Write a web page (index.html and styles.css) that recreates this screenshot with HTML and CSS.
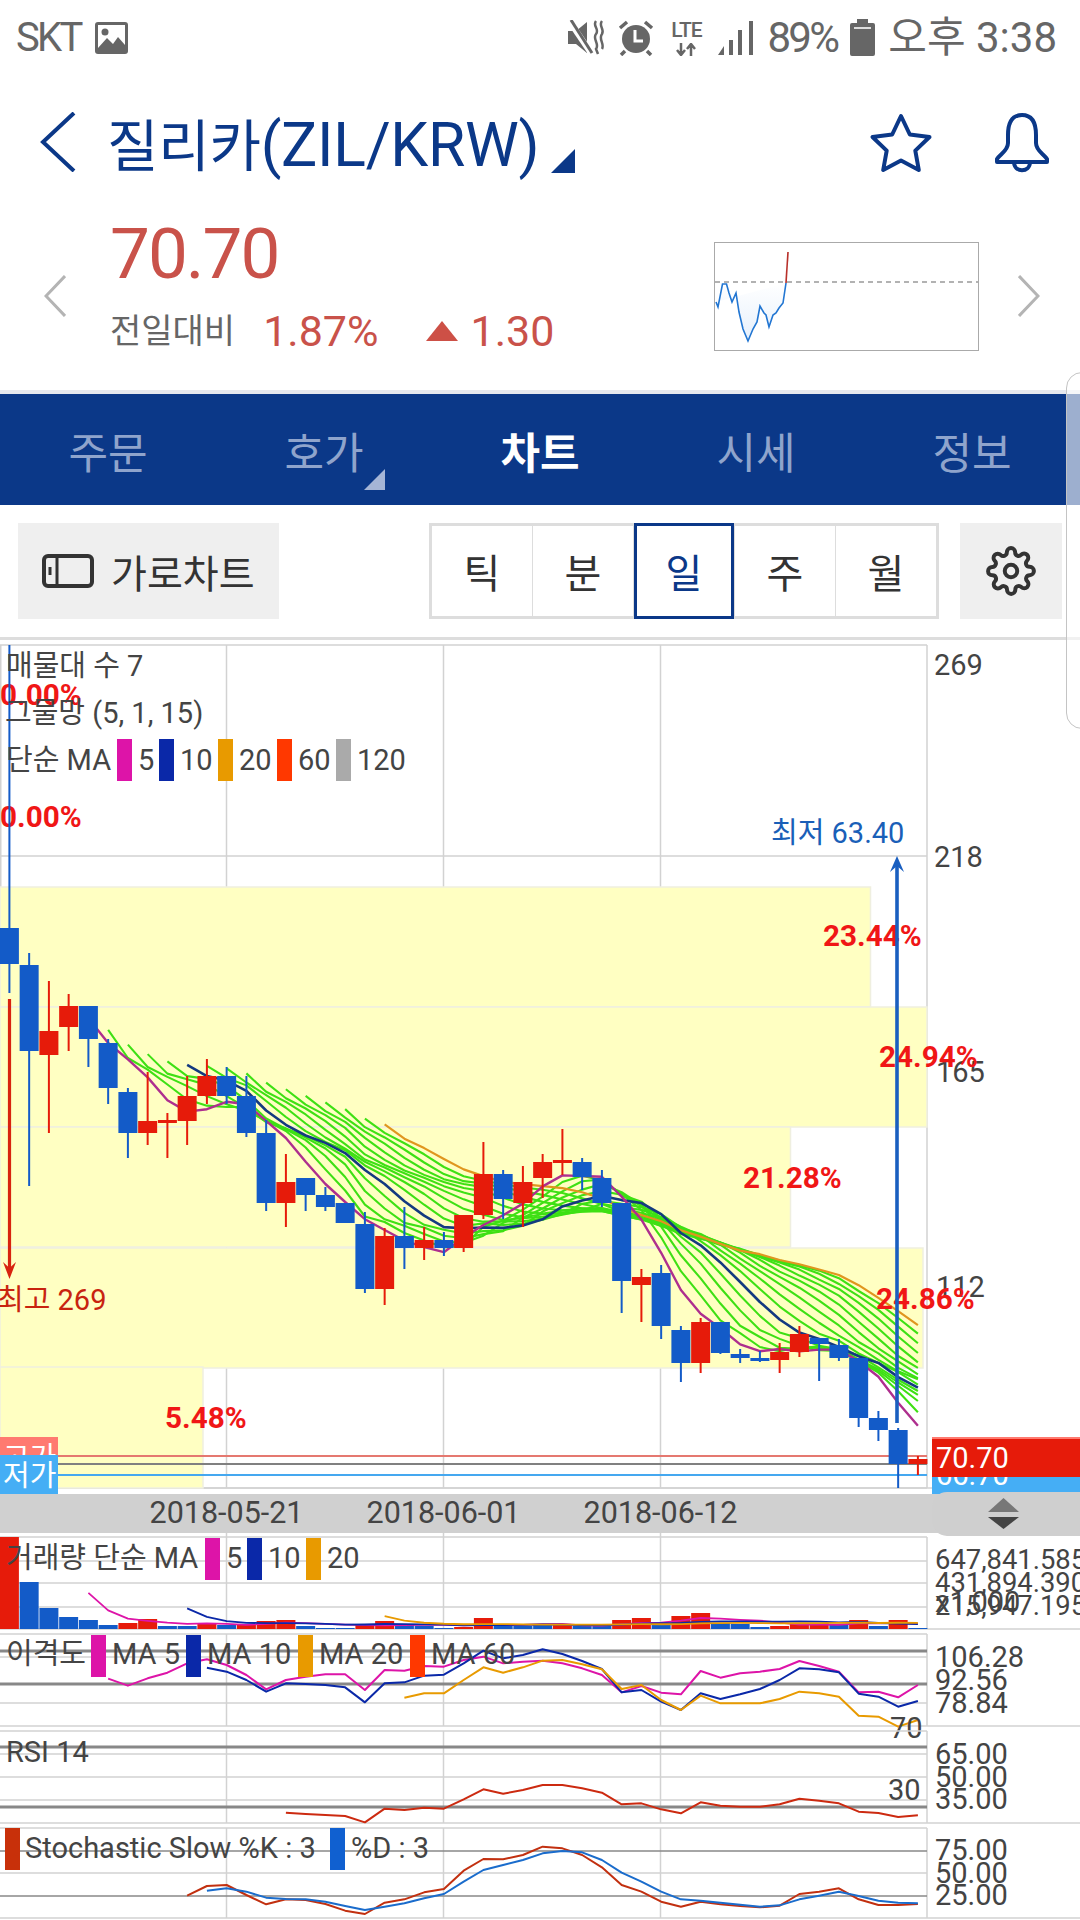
FILE: index.html
```html
<!DOCTYPE html>
<html lang="ko">
<head>
    <meta charset="UTF-8">
    <meta name="viewport" content="width=device-width, initial-scale=1.0">
    <title>질리카 차트</title>
    <link rel="stylesheet" href="styles.css">
</head>
<body>
    <!-- Status bar -->
    <div class="status-bar">
        <div class="status-left">
            <span class="status-text carrier">SKT</span>
            <svg class="status-icon" width="35" height="34" viewBox="0 0 35 34">
                <rect x="1" y="1" width="33" height="32" rx="3" fill="#666"/>
                <rect x="4" y="4" width="27" height="26" fill="#fff"/>
                <circle cx="11" cy="11" r="3.5" fill="#666"/>
                <path d="M4 27 L13 17 L19 23 L24 16 L31 24 L31 30 L4 30 Z" fill="#666"/>
            </svg>
        </div>
        <div class="status-right">
            <svg class="status-icon" width="38" height="35" viewBox="0 0 38 35">
                <path d="M1 11 H9 L20 2 V33 L9 24 H1 Z" fill="#666"/>
                <path d="M3 2 L24 33" stroke="#fff" stroke-width="6"/>
                <path d="M4 0 L25 33" stroke="#666" stroke-width="3"/>
                <path d="M29 1 C25 6 33 9 29 14 C25 19 33 24 29 29 L31 34 M35 1 C31 6 38 9 35 14 C31 19 38 24 35 29" fill="none" stroke="#666" stroke-width="2.5"/>
            </svg>
            <svg class="status-icon" width="36" height="36" viewBox="0 0 36 36">
                <circle cx="18" cy="19" r="14" fill="#666"/>
                <path d="M17 10 V21 H25" fill="none" stroke="#fff" stroke-width="3"/>
                <path d="M2 8 L9 2 M34 8 L27 2 M7 31 L3 35 M29 31 L33 35" stroke="#666" stroke-width="3.5"/>
            </svg>
            <div class="lte">
                <span class="lte-text">LTE</span>
                <svg width="24" height="13" viewBox="0 0 24 13">
                    <path d="M7 0 V11 M3 7 L7 12 L11 7 M17 13 V2 M13 6 L17 1 L21 6" fill="none" stroke="#666" stroke-width="2.5"/>
                </svg>
            </div>
            <svg class="status-icon" width="36" height="35" viewBox="0 0 36 35">
                <path d="M0 35 L6 26 V35 Z M11 20 H15 V35 H11 Z M20 10 H24 V35 H20 Z M31 1 H35 V35 H31 Z" fill="#666"/>
            </svg>
            <span class="status-text">89%</span>
            <svg class="status-icon" width="25" height="37" viewBox="0 0 25 37">
                <path d="M7 0 H18 V4 H23 Q25 4 25 6 V35 Q25 37 23 37 H2 Q0 37 0 35 V6 Q0 4 2 4 H7 Z" fill="#666"/>
                <rect x="4" y="8" width="17" height="2" fill="#ddd"/>
            </svg>
            <span class="status-text clock">오후 3:38</span>
        </div>
    </div>

    <!-- Title -->
    <div class="title-row">
        <svg class="back-icon" width="36" height="60" viewBox="0 0 36 60">
            <path d="M34 1 L3 30 L34 59" fill="none" stroke="#0b3888" stroke-width="4"/>
        </svg>
        <h1 class="title"><span class="title-ko">질리카</span>(ZIL/KRW)</h1>
        <div class="corner-tri title-tri"></div>
        <svg class="star-icon" width="64" height="60" viewBox="0 0 64 60">
            <path d="M32 3 L40.8 21.5 L60.5 24 L46.3 37.6 L49.8 57 L32 47.5 L14.2 57 L17.7 37.6 L3.5 24 L23.2 21.5 Z" fill="none" stroke="#0b3888" stroke-width="4" stroke-linejoin="round"/>
        </svg>
        <svg class="bell-icon" width="56" height="60" viewBox="0 0 56 60">
            <path d="M28 2 C17 2 14 12 14 22 L14 30 C14 38 6 41 3 46 L3 49 L53 49 L53 46 C50 41 42 38 42 30 L42 22 C42 12 39 2 28 2 Z" fill="none" stroke="#0b3888" stroke-width="4" stroke-linejoin="round"/>
            <path d="M20 49 C20 60 36 60 36 49" fill="none" stroke="#0b3888" stroke-width="4"/>
        </svg>
    </div>

    <!-- Price summary -->
    <div class="price-row">
        <svg class="side-arrow" width="22" height="42" viewBox="0 0 22 42">
            <path d="M21 1 L2 21 L21 41" fill="none" stroke="#b4b4b4" stroke-width="3"/>
        </svg>
        <div class="price-block">
            <div class="price">70.70</div>
            <div class="change">
                <span class="change-label">전일대비</span>
                <span class="change-rate">1.87%</span>
                <span class="up-tri"></span>
                <span class="change-value">1.30</span>
            </div>
        </div>
        <svg class="mini-chart" width="263" height="107" viewBox="0 0 263 107">
            <defs>
                <linearGradient id="miniFill" x1="0" y1="0" x2="0" y2="1">
                    <stop offset="0" stop-color="#ffffff"/>
                    <stop offset="1" stop-color="#e6f0fc"/>
                </linearGradient>
            </defs>
            <path d="M1 59 L3 64 L7.5 41 L11.5 41 L14 50 L17 59 L21 50 L24 69 L28 86 L33 98 L38 86 L42 79 L45 63 L49 70 L51 72 L54 84 L58 72 L61 70 L64 65 L68 60 L71 40 Z" fill="url(#miniFill)"/>
            <line x1="0" y1="39" x2="263" y2="39" stroke="#999" stroke-width="1.5" stroke-dasharray="5 4"/>
            <path d="M1 59 L3 64 L7.5 41 L11.5 41 L14 50 L17 59 L21 50 L24 69 L28 86 L33 98 L38 86 L42 79 L45 63 L49 70 L51 72 L54 84 L58 72 L61 70 L64 65 L68 60 L71 40" fill="none" stroke="#2276d2" stroke-width="1.6"/>
            <path d="M71 40 L73 9" fill="none" stroke="#b8302a" stroke-width="1.6"/>
        </svg>
        <svg class="side-arrow" width="22" height="42" viewBox="0 0 22 42">
            <path d="M1 1 L20 21 L1 41" fill="none" stroke="#b4b4b4" stroke-width="3"/>
        </svg>
    </div>

    <!-- Tabs -->
    <div class="tabs">
        <div class="tab">주문</div>
        <div class="tab">호가<div class="corner-tri tab-tri"></div></div>
        <div class="tab active">차트</div>
        <div class="tab">시세</div>
        <div class="tab">정보</div>
    </div>

    <!-- Chart controls -->
    <div class="toolbar">
        <div class="landscape-btn">
            <svg width="52" height="34" viewBox="0 0 52 34">
                <rect x="2" y="2" width="48" height="30" rx="4" fill="none" stroke="#333" stroke-width="4"/>
                <path d="M15 2 V32 M8 13 V21" fill="none" stroke="#333" stroke-width="3"/>
            </svg>
            <span>가로차트</span>
        </div>
        <div class="period-group">
            <div class="period">틱</div>
            <div class="period">분</div>
            <div class="period selected">일</div>
            <div class="period">주</div>
            <div class="period">월</div>
        </div>
        <div class="settings-btn">
            <svg width="50" height="50" viewBox="0 0 24 24" fill="none" stroke="#333" stroke-width="1.9" stroke-linejoin="round">
                <circle cx="12" cy="12" r="3"/>
                <path d="M19.4 15a1.65 1.65 0 0 0 .33 1.82l.06.06a2 2 0 0 1 0 2.83 2 2 0 0 1-2.83 0l-.06-.06a1.65 1.65 0 0 0-1.82-.33 1.65 1.65 0 0 0-1 1.51V21a2 2 0 0 1-2 2 2 2 0 0 1-2-2v-.09A1.65 1.65 0 0 0 9 19.4a1.65 1.65 0 0 0-1.82.33l-.06.06a2 2 0 0 1-2.83 0 2 2 0 0 1 0-2.83l.06-.06a1.65 1.65 0 0 0 .33-1.82 1.65 1.65 0 0 0-1.51-1H3a2 2 0 0 1-2-2 2 2 0 0 1 2-2h.09A1.65 1.65 0 0 0 4.6 9a1.65 1.65 0 0 0-.33-1.82l-.06-.06a2 2 0 0 1 0-2.83 2 2 0 0 1 2.83 0l.06.06a1.65 1.65 0 0 0 1.82.33H9a1.65 1.65 0 0 0 1-1.51V3a2 2 0 0 1 2-2 2 2 0 0 1 2 2v.09a1.65 1.65 0 0 0 1 1.51 1.65 1.65 0 0 0 1.82-.33l.06-.06a2 2 0 0 1 2.83 0 2 2 0 0 1 0 2.83l-.06.06a1.65 1.65 0 0 0-.33 1.82V9a1.65 1.65 0 0 0 1.51 1H21a2 2 0 0 1 2 2 2 2 0 0 1-2 2h-.09a1.65 1.65 0 0 0-1.51 1z"/>
            </svg>
        </div>
    </div>

    <!-- Chart, drawn by chart.js in page coordinates -->
    <div class="chart-area">
        <svg id="chart" width="1080" height="1280" viewBox="0 640 1080 1280"></svg>
    </div>

    <div class="edge-handle"></div>

    <script src="chart.js"></script>
</body>
</html>
```

FILE: styles.css
```css
body {
    font-family: Roboto, "Noto Sans CJK KR", sans-serif;
    background-color: #fff;
    margin: 0;
    width: 1080px;
    height: 1920px;
    overflow: hidden;
    position: relative;
}

svg {
    display: block;
}

/* Status bar */
.status-bar {
    height: 75px;
    display: flex;
    justify-content: space-between;
    align-items: center;
    padding: 0 23px 0 16px;
    box-sizing: border-box;
}

.status-left,
.status-right {
    display: flex;
    align-items: center;
}

.status-left {
    gap: 13px;
}

.status-right {
    gap: 13px;
}

.status-text {
    font-size: 42px;
    line-height: 44px;
    letter-spacing: -2.7px;
    color: #666;
}

.carrier {
    font-size: 40px;
}

.clock {
    letter-spacing: 0;
}

.lte {
    display: flex;
    flex-direction: column;
    align-items: center;
    gap: 2px;
    width: 38px;
}

.lte-text {
    font-size: 21px;
    line-height: 21px;
    font-weight: 500;
    letter-spacing: -1px;
    color: #666;
}

/* Title */
.title-row {
    height: 115px;
    display: flex;
    align-items: flex-start;
    box-sizing: border-box;
    padding: 37px 30px 0 40px;
}

.title {
    margin: 6px 0 0 31px;
    font-size: 60.6px;
    line-height: 56px;
    font-weight: 400;
    letter-spacing: -0.3px;
    color: #0b3888;
    white-space: nowrap;
}

.title-ko {
    font-size: 56px;
}

.corner-tri {
    width: 0;
    height: 0;
    border-style: solid;
    border-width: 0 0 24px 24px;
    border-color: transparent transparent #0b3888 transparent;
}

.title-tri {
    margin: 37px 0 0 12px;
}

.star-icon {
    margin: 1px 0 0 auto;
}

.bell-icon {
    margin: 1px 0 0 61px;
}

/* Price */
.price-row {
    height: 200px;
    display: flex;
    align-items: flex-start;
    box-sizing: border-box;
    padding: 0 40px 0 44px;
}

.side-arrow {
    margin-top: 85px;
}

.price-block {
    margin-left: 44px;
    padding-top: 29px;
    flex: 1;
}

.price {
    font-size: 71px;
    line-height: 70px;
    letter-spacing: -2px;
    color: #c9524a;
}

.change {
    display: flex;
    align-items: center;
    margin-top: 21px;
    font-size: 43px;
    line-height: 42px;
    color: #c9524a;
}

.change-label {
    font-size: 34px;
    color: #666;
    margin-right: 28px;
}

.up-tri {
    width: 0;
    height: 0;
    border-style: solid;
    border-width: 0 16px 20px 16px;
    border-color: transparent transparent #cd5046 transparent;
    margin: 0 12px 0 48px;
}

.mini-chart {
    margin: 52px 39px 0 0;
    border: 1px solid #aaa;
}

/* Tabs */
.tabs {
    display: flex;
    height: 115px;
    box-sizing: border-box;
    border-top: 4px solid #e6e8ee;
    background-color: #0b3888;
}

.tab {
    flex: 1;
    position: relative;
    display: flex;
    align-items: center;
    justify-content: center;
    font-size: 43px;
    color: #8fa4cc;
}

.tab.active {
    color: #fff;
    font-weight: 700;
}

.tab-tri {
    position: absolute;
    right: 47px;
    bottom: 15px;
    border-width: 0 0 21px 21px;
    border-color: transparent transparent #a5b5d6 transparent;
}

/* Toolbar */
.toolbar {
    height: 132px;
    display: flex;
    align-items: flex-start;
    box-sizing: border-box;
    padding: 18px 18px 0;
}

.landscape-btn {
    width: 261px;
    height: 96px;
    display: flex;
    align-items: center;
    gap: 17px;
    box-sizing: border-box;
    padding-left: 24px;
    background-color: #efefef;
    font-size: 39px;
    color: #333;
}

.period-group {
    display: flex;
    width: 510px;
    height: 96px;
    box-sizing: border-box;
    border: 3px solid #ddd;
    margin-left: auto;
}

.period {
    flex: 1;
    position: relative;
    display: flex;
    align-items: center;
    justify-content: center;
    border-left: 1.5px solid #ddd;
    font-size: 40px;
    color: #333;
}

.period:first-child {
    border-left: none;
}

.period.selected {
    color: #0b3888;
}

.period.selected::after {
    content: "";
    position: absolute;
    top: -3px;
    bottom: -3px;
    left: 0;
    right: 0;
    border: 3px solid #0b3888;
}

.settings-btn {
    width: 102px;
    height: 96px;
    margin-left: 21px;
    display: flex;
    align-items: center;
    justify-content: center;
    background-color: #efefef;
}

/* Chart */
.chart-area {
    border-top: 3px solid #ddd;
    height: 1280px;
    margin-top: 0;
}

#chart text {
    font-family: Roboto, "Noto Sans CJK KR", sans-serif;
}

.axis-label {
    font-size: 29px;
    fill: #444;
}

.volume-label {
    font-size: 27.4px;
    fill: #444;
}

.legend-label {
    font-size: 29px;
    fill: #444;
}

.date-label {
    font-size: 30.5px;
    fill: #444;
    text-anchor: middle;
}

.pct-label {
    font-size: 29.7px;
    font-weight: 700;
    fill: #f01616;
}

.high-label {
    font-size: 29px;
    fill: #c8230f;
}

.low-label {
    font-size: 29px;
    fill: #1a5fb8;
}

.tag-label {
    font-size: 29px;
    fill: #fff;
}

/* Pull handle on the right edge */
.edge-handle {
    position: absolute;
    top: 372px;
    left: 1066px;
    width: 40px;
    height: 355px;
    border: 1.5px solid #c4c4c4;
    border-radius: 16px;
    background-color: rgba(255, 255, 255, 0.6);
}
```

FILE: chart.js
```js
var NS = 'http://www.w3.org/2000/svg';
var svg = document.getElementById('chart');

var RED = '#e61b0a';
var BLUE = '#135bc8';
var MAGENTA = '#dd14a8';
var NAVY = '#0a28a8';
var ORANGE = '#e89a00';
var VERMILION = '#ff3800';
var GREY = '#aaa';

function el(name, attrs, text) {
    var node = document.createElementNS(NS, name);
    for (var k in attrs) node.setAttribute(k, attrs[k]);
    if (text !== undefined) node.textContent = text;
    svg.appendChild(node);
    return node;
}

function rect(x, y, w, h, fill) {
    return el('rect', { x: x, y: y, width: w, height: h, fill: fill });
}

function line(x1, y1, x2, y2, color, width) {
    return el('line', { x1: x1, y1: y1, x2: x2, y2: y2, stroke: color, 'stroke-width': width });
}

function label(text, x, y, cls) {
    return el('text', { x: x, y: y, 'class': cls }, text);
}

function poly(points, color, width) {
    return el('polyline', {
        points: points.map(function (p) { return p[0] + ',' + p[1]; }).join(' '),
        fill: 'none', stroke: color, 'stroke-width': width, 'stroke-linejoin': 'round'
    });
}

function cx(i) {
    return 9.4 + 19.75 * i;
}

// high, body top, body bottom, low, colour
var candles = [
    [645, 928, 964, 993, 'b'], [953, 965, 1051, 1186, 'b'], [981, 1031, 1055, 1133, 'r'],
    [994, 1006, 1027, 1051, 'r'], [1006, 1006, 1039, 1067, 'b'], [1039, 1043, 1088, 1104, 'b'],
    [1088, 1092, 1133, 1158, 'b'], [1072, 1121, 1133, 1145, 'r'], [1113, 1120, 1122, 1158, 'r'],
    [1076, 1096, 1121, 1145, 'r'], [1059, 1076, 1096, 1104, 'r'], [1067, 1076, 1096, 1104, 'b'],
    [1076, 1096, 1133, 1137, 'b'], [1120, 1133, 1203, 1211, 'b'], [1154, 1182, 1203, 1227, 'r'],
    [1178, 1178, 1195, 1211, 'b'], [1187, 1195, 1207, 1211, 'b'], [1203, 1203, 1223, 1223, 'b'],
    [1212, 1224, 1289, 1293, 'b'], [1228, 1236, 1289, 1305, 'r'], [1207, 1236, 1248, 1269, 'b'],
    [1227, 1240, 1248, 1260, 'r'], [1232, 1240, 1248, 1256, 'b'], [1215, 1215, 1248, 1252, 'r'],
    [1142, 1174, 1215, 1219, 'r'], [1170, 1174, 1199, 1219, 'b'], [1166, 1182, 1203, 1227, 'r'],
    [1154, 1162, 1178, 1198, 'r'], [1129, 1160, 1162, 1175, 'r'], [1158, 1162, 1177, 1190, 'b'],
    [1170, 1178, 1203, 1207, 'b'], [1203, 1203, 1281, 1313, 'b'], [1269, 1277, 1285, 1322, 'r'],
    [1265, 1273, 1326, 1339, 'b'], [1326, 1330, 1363, 1382, 'b'], [1318, 1322, 1363, 1373, 'r'],
    [1322, 1322, 1353, 1354, 'b'], [1349, 1354, 1358, 1363, 'b'], [1351, 1358, 1360, 1362, 'b'],
    [1343, 1352, 1360, 1373, 'r'], [1326, 1334, 1352, 1357, 'r'], [1338, 1338, 1344, 1381, 'b'],
    [1339, 1345, 1358, 1361, 'b'], [1358, 1358, 1418, 1427, 'b'], [1411, 1418, 1430, 1441, 'b'],
    [1428, 1430, 1464, 1488, 'b'], [1456, 1459, 1464, 1475, 'r']
];

var closes = candles.map(function (c) { return c[4] === 'r' ? c[1] : c[2]; });

var volTops = [1537, 1582, 1608, 1617, 1620, 1625, 1623, 1619, 1626, 1626, 1623, 1625, 1624, 1621, 1620, 1626,
    1628, 1628, 1624, 1621, 1625, 1626, 1628, 1627, 1618, 1625, 1626, 1625, 1625, 1626, 1626, 1620,
    1618, 1623, 1616, 1613, 1623, 1624, 1627, 1626, 1623, 1623, 1625, 1620, 1626, 1620, 1628];
var volColors = 'rbbbbbrrbbrbrrrbbbrrbbbrrbbbrbbrrbrrbbbrrrbrbrb'.slice(0, 47);

function movingAverage(values, period) {
    var out = [];
    for (var i = period - 1; i < values.length; i++) {
        var sum = 0;
        for (var j = i - period + 1; j <= i; j++) sum += values[j];
        out.push([cx(i), sum / period]);
    }
    return out;
}

// indicator series read off per candle, y offset from the panel origin (third pixels)
function series(start, values) {
    return values.map(function (v, n) { return [cx(start + n), 1530 + v / 3]; });
}

var GRID = '#d2d2d2';
var GRID_X = [226.5, 443.5, 660.5];
var RIGHT = 927;

function panel(top, bottom, lightLines, heavyLines) {
    GRID_X.forEach(function (x) { line(x, top, x, bottom, GRID, 1.5); });
    line(0, top, RIGHT, top, GRID, 1.5);
    line(RIGHT, top, RIGHT, bottom, GRID, 1.5);
    lightLines.forEach(function (y) { line(0, y, RIGHT, y, GRID, 1.5); });
    line(0, bottom, 1080, bottom, GRID, 1.5);
    heavyLines.forEach(function (h) { line(0, h[0], RIGHT, h[0], '#888', h[1]); });
}

/* ---------- price panel ---------- */
panel(645, 1488, [856, 1488], []);
rect(0, 645, 1.5, 843, GRID);

[[887, 870.5], [1007, 927], [1127, 790.5], [1248, 923], [1367, 203]].forEach(function (b, n) {
    var bottom = n === 4 ? 1488 : b[0] + 120;
    var band = rect(0, b[0], b[1], bottom - b[0], '#ffffc2');
    band.setAttribute('stroke', '#efefe0');
    band.setAttribute('stroke-width', 1.5);
});

// ribbon of averages under the candles
[19, 18, 17, 16, 15, 14, 13, 12, 11, 9, 8, 7, 6].forEach(function (p) {
    poly(movingAverage(closes, p), '#3ee014', 2.1);
});
poly(movingAverage(closes, 20), '#e0961e', 2.2);
poly(movingAverage(closes, 10), '#143a80', 2.6);
poly(movingAverage(closes, 5), '#ae2f8e', 2.4);

label('269', 934, 675, 'axis-label');
label('218', 934, 867, 'axis-label');
label('165', 936, 1082, 'axis-label');
label('112', 936, 1297, 'axis-label');

label('0.00%', 0, 705, 'pct-label');
label('0.00%', 0, 827, 'pct-label');
label('23.44%', 823, 946, 'pct-label');
label('24.94%', 879, 1067, 'pct-label');
label('21.28%', 743, 1188, 'pct-label');
label('24.86%', 876, 1309, 'pct-label');
label('5.48%', 165, 1428, 'pct-label');

// price reference lines
line(56, 1456, RIGHT, 1456, '#e57870', 2);
line(56, 1464, RIGHT, 1464, '#808080', 2);
line(56, 1475, RIGHT, 1475, '#45a8f0', 2);

candles.forEach(function (c, i) {
    var x = cx(i);
    var color = c[4] === 'r' ? RED : BLUE;
    line(x, c[0], x, c[3], color, 2);
    rect(x - 9.5, c[1], 19, Math.max(c[2] - c[1], 3), color);
});

// highest / lowest markers
line(9.5, 999, 9.5, 1272, '#d8230f', 3.2);
el('path', { d: 'M3 1262 L9.5 1268 L16 1262 L9.5 1279 Z', fill: '#d8230f' });
label('최고 269', -3, 1310, 'high-label');

line(897, 1423, 897, 864, '#1a5fc0', 3.6);
el('path', { d: 'M890 872 L897 866 L904 872 L897 856 Z', fill: '#1a5fc0' });
label('최저 63.40', 771, 843, 'low-label');

// left tags
rect(0, 1437, 58, 40, '#ff7a70');
label('고가', 3, 1468, 'tag-label');
rect(0, 1455, 58, 39, '#45aef5');
label('저가', 3, 1486, 'tag-label');

// right tags
rect(932, 1455, 148, 40, '#45aef5');
label('66.70', 936, 1485, 'tag-label');
rect(932, 1437, 148, 40, '#ff7a70');
rect(932, 1439, 148, 38, RED);
label('70.70', 936, 1468, 'tag-label');

// legend
label('매물대 수 7', 6, 676, 'legend-label');
label('그물망 (5, 1, 15)', 5, 723, 'legend-label');
label('단순 MA', 6, 770, 'legend-label');
[[117, MAGENTA, '5'], [159, NAVY, '10'], [218, ORANGE, '20'], [277, VERMILION, '60'], [336, GREY, '120']].forEach(function (m) {
    rect(m[0], 739, 15, 42, m[1]);
    label(m[2], m[0] + 21, 770, 'legend-label');
});

/* ---------- date strip ---------- */
rect(0, 1494, 1080, 39, '#d0d0d0');
label('2018-05-21', 226.5, 1523, 'date-label');
label('2018-06-01', 443.5, 1523, 'date-label');
label('2018-06-12', 660.5, 1523, 'date-label');
el('rect', { x: 932, y: 1492, width: 170, height: 44, rx: 15, fill: '#cfcfcf' });
el('path', { d: 'M1003.5 1498 L1019 1512 H988 Z', fill: '#777' });
el('path', { d: 'M988 1517 H1019 L1003.5 1529 Z', fill: '#444' });

/* ---------- volume ---------- */
panel(1537, 1629, [1561, 1583, 1607], []);
GRID_X.forEach(function (x) { line(x, 1533, x, 1537, GRID, 1.5); });

volTops.forEach(function (top, i) {
    rect(cx(i) - 9.5, top, 19, 1629 - top, volColors[i] === 'r' ? RED : BLUE);
});
poly(movingAverage(volTops, 5), MAGENTA, 1.8);
poly(movingAverage(volTops, 10), NAVY, 1.8);
poly(movingAverage(volTops, 20), ORANGE, 1.8);

label('거래량 단순 MA', 6, 1568, 'legend-label');
[[205, MAGENTA, '5'], [247, NAVY, '10'], [306, ORANGE, '20']].forEach(function (m) {
    rect(m[0], 1538, 15, 42, m[1]);
    label(m[2], m[0] + 21, 1568, 'legend-label');
});
label('647,841.585', 935, 1569, 'volume-label');
label('431,894.390', 935, 1592, 'volume-label');
label('215,947.195', 935, 1615, 'volume-label');
label('x1,000', 935, 1612, 'axis-label');

/* ---------- disparity ---------- */
panel(1634, 1726, [1657, 1703], [[1651, 3], [1684, 3]]);

poly(series(5, [446, 467, 445, 428, 400, 388, 405, 435, 478, 450, 440, 433, 433, 480, 420, 422, 408, 410, 390, 380, 400, 395,
    392, 400, 415, 435, 487, 468, 488, 493, 423, 443, 430, 425, 417, 393, 408, 425, 487, 485, 502, 465]), MAGENTA, 2);
poly(series(10, [413, 425, 450, 485, 460, 462, 465, 472, 517, 460, 457, 437, 434, 400, 362, 385, 375,
    358, 372, 393, 417, 487, 480, 515, 540, 490, 507, 493, 477, 450, 415, 418, 427, 491, 500, 530, 513]), NAVY, 2);
poly(series(20, [503, 490, 490, 450, 412, 428, 412,
    392, 390, 403, 418, 477, 465, 510, 540, 497, 520, 520, 520, 507, 485, 490, 500, 557, 560, 590, 570]), ORANGE, 2);

label('이격도', 6, 1664, 'legend-label');
[[91, MAGENTA, 'MA 5'], [186, NAVY, 'MA 10'], [298, ORANGE, 'MA 20'], [410, VERMILION, 'MA 60']].forEach(function (m) {
    rect(m[0], 1635, 15, 42, m[1]);
    label(m[2], m[0] + 21, 1664, 'legend-label');
});
label('106.28', 935, 1667, 'axis-label');
label('92.56', 935, 1690, 'axis-label');
label('78.84', 935, 1713, 'axis-label');
label('70', 890, 1738, 'axis-label');

/* ---------- RSI ---------- */
panel(1731, 1823, [1754, 1777, 1800], [[1747, 3], [1807, 3]]);

poly(series(14, [848, 852, 855, 858, 877, 836, 840, 833, 836, 808, 778, 791, 780,
    765, 765, 775, 788, 823, 820, 838, 850, 817, 827, 830, 830, 823, 806, 812, 820, 845, 849, 861, 856]), '#cc2a10', 2);

label('RSI 14', 6, 1762, 'legend-label');
label('65.00', 935, 1764, 'axis-label');
label('50.00', 935, 1787, 'axis-label');
label('35.00', 935, 1809, 'axis-label');
label('30', 888, 1800, 'axis-label');

/* ---------- stochastic ---------- */
panel(1828, 1918, [1873], [[1851, 1.5], [1896, 1.5]]);

poly(series(9, [1097, 1068, 1065, 1095, 1123, 1108, 1110, 1122, 1142, 1152, 1118, 1108, 1087, 1077, 1022, 987, 988, 975,
    950, 955, 975, 1012, 1065, 1085, 1115, 1130, 1115, 1123, 1128, 1132, 1127, 1092, 1085, 1075, 1108, 1125, 1125, 1122]), '#c23010', 2);
poly(series(10, [1082, 1075, 1085, 1103, 1107, 1108, 1115, 1128, 1140, 1130, 1120, 1105, 1092, 1055, 1020, 1005, 990,
    970, 963, 967, 990, 1028, 1055, 1085, 1108, 1112, 1118, 1124, 1130, 1126, 1108, 1097, 1085, 1098, 1112, 1118, 1120]), '#1a6ccc', 2);

rect(5, 1828, 15, 42, '#c8300a');
label('Stochastic Slow %K : 3', 25, 1858, 'legend-label');
rect(330, 1828, 15, 42, '#1060d0');
label('%D : 3', 351, 1858, 'legend-label');
label('75.00', 935, 1860, 'axis-label');
label('50.00', 935, 1883, 'axis-label');
label('25.00', 935, 1905, 'axis-label');
```
